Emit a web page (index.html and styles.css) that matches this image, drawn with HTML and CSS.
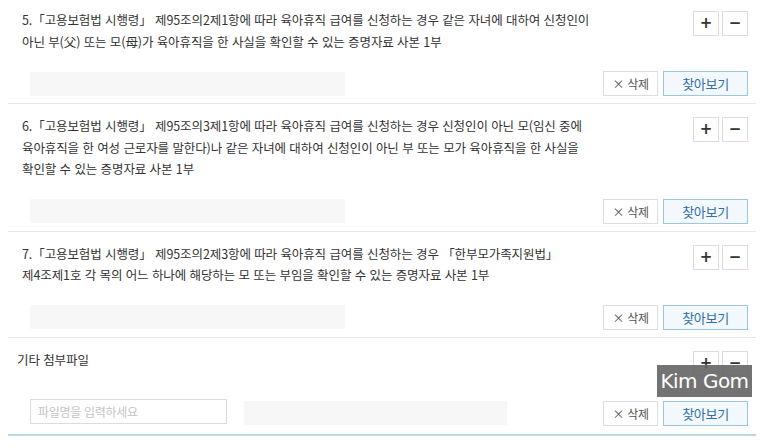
FILE: index.html
```html
<!DOCTYPE html>
<html lang="ko">

<head>
  <meta charset="UTF-8" />
  <meta name="viewport" content="width=device-width, initial-scale=1" />
  <title>증빙서류 첨부</title>
  <link rel="stylesheet" href="styles.css">
</head>

<body>
  <div class="doc-list">
    <div class="doc-row first">
      <div class="doc-head">
        <p class="doc-title">5.「고용보험법 시행령」 제95조의2제1항에 따라 육아휴직 급여를 신청하는 경우 같은 자녀에 대하여 신청인이<br/>아닌 부(父) 또는 모(母)가 육아휴직을 한 사실을 확인할 수 있는 증명자료 사본 1부</p>
        <div class="doc-ctrl">
          <button class="sq">+</button>
          <button class="sq">&minus;</button>
        </div>
      </div>
      <div class="doc-files">
        <div class="file-box"></div>
        <div class="file-actions">
          <button class="btn-del">&times; 삭제</button>
          <button class="btn-find">찾아보기</button>
        </div>
      </div>
    </div>

    <div class="doc-row">
      <div class="doc-head">
        <p class="doc-title">6.「고용보험법 시행령」 제95조의3제1항에 따라 육아휴직 급여를 신청하는 경우 신청인이 아닌 모(임신 중에<br/>육아휴직을 한 여성 근로자를 말한다)나 같은 자녀에 대하여 신청인이 아닌 부 또는 모가 육아휴직을 한 사실을<br/>확인할 수 있는 증명자료 사본 1부</p>
        <div class="doc-ctrl">
          <button class="sq">+</button>
          <button class="sq">&minus;</button>
        </div>
      </div>
      <div class="doc-files">
        <div class="file-box"></div>
        <div class="file-actions">
          <button class="btn-del">&times; 삭제</button>
          <button class="btn-find">찾아보기</button>
        </div>
      </div>
    </div>

    <div class="doc-row">
      <div class="doc-head">
        <p class="doc-title">7.「고용보험법 시행령」 제95조의2제3항에 따라 육아휴직 급여를 신청하는 경우 「한부모가족지원법」<br/>제4조제1호 각 목의 어느 하나에 해당하는 모 또는 부임을 확인할 수 있는 증명자료 사본 1부</p>
        <div class="doc-ctrl">
          <button class="sq">+</button>
          <button class="sq">&minus;</button>
        </div>
      </div>
      <div class="doc-files">
        <div class="file-box"></div>
        <div class="file-actions">
          <button class="btn-del">&times; 삭제</button>
          <button class="btn-find">찾아보기</button>
        </div>
      </div>
    </div>

    <div class="doc-row etc">
      <div class="doc-head">
        <p class="doc-title">기타 첨부파일</p>
        <div class="doc-ctrl">
          <button class="sq">+</button>
          <button class="sq">&minus;</button>
          <span class="watermark">Kim Gom</span>
        </div>
      </div>
      <div class="doc-files">
        <input class="file-name" type="text" placeholder="파일명을 입력하세요">
        <div class="file-box short"></div>
        <div class="file-actions">
          <button class="btn-del">&times; 삭제</button>
          <button class="btn-find">찾아보기</button>
        </div>
      </div>
    </div>
  </div>
</body>

</html>
```

FILE: styles.css
```css
body {
  margin: 0;
  background: white;
  color: #333;
  font-family: "Noto Sans CJK KR", "Noto Sans", sans-serif;
  font-size: 12.5px;
  overflow: hidden;
}

.doc-list {
  width: 748px;
  margin: -2px 0 0 8px;
  border-bottom: 2px solid #bcd6e4;
}

.doc-row {
  padding: 11px 8px 7px 14px;
  border-bottom: 1px solid #e8e8e8;
}

.doc-row.etc {
  padding-left: 9px;
  padding-bottom: 8px;
  border-bottom: none;
}

.doc-head {
  display: flex;
  justify-content: space-between;
  align-items: flex-start;
}

.doc-title {
  margin: 0;
  line-height: 21.5px;
  letter-spacing: -0.1px;
}

.doc-ctrl {
  position: relative;
  display: flex;
  gap: 3px;
  margin-top: 2px;
}

.sq {
  width: 26px;
  height: 25px;
  padding: 0;
  border: 1px solid #ddd;
  background: white;
  color: #333;
  font-family: "DejaVu Sans", sans-serif;
  font-size: 15px;
  font-weight: bold;
  line-height: 1;
}

.watermark {
  position: absolute;
  top: 14px;
  right: -4px;
  width: 95px;
  height: 32px;
  background: rgba(100, 100, 100, 0.9);
  color: white;
  font-family: "DejaVu Sans", sans-serif;
  font-size: 20px;
  line-height: 32px;
  text-align: center;
  letter-spacing: -0.5px;
}

.doc-files {
  display: flex;
  align-items: center;
  gap: 17px;
  margin-top: 19px;
  padding-left: 8px;
}

.doc-row.etc .doc-files {
  margin-top: 21px;
  padding-left: 13px;
}

.file-box {
  width: 315px;
  height: 24px;
  background: #f7f7f7;
}

.file-box.short {
  width: 263px;
  margin-top: 3px;
}

.file-name {
  width: 197px;
  height: 25px;
  box-sizing: border-box;
  margin: 0;
  padding: 0 7px;
  border: 1px solid #dcdcdc;
  font-family: inherit;
  font-size: 12px;
  letter-spacing: -0.3px;
  color: #333;
}

.file-name::placeholder {
  color: #c4c4c4;
}

.file-actions {
  display: flex;
  gap: 5px;
  margin-left: auto;
}

.doc-row.etc .file-actions {
  margin-top: 4px;
}

.btn-del,
.btn-find {
  height: 25px;
  padding: 0;
  font-family: inherit;
  font-size: 12px;
  letter-spacing: -0.3px;
}

.btn-del {
  width: 55px;
  border: 1px solid #ddd;
  background: white;
  color: #555;
}

.btn-find {
  width: 85px;
  border: 1px solid #9cc5de;
  background: #f3f8fc;
  color: #2f6fa6;
  font-size: 13px;
}
```
